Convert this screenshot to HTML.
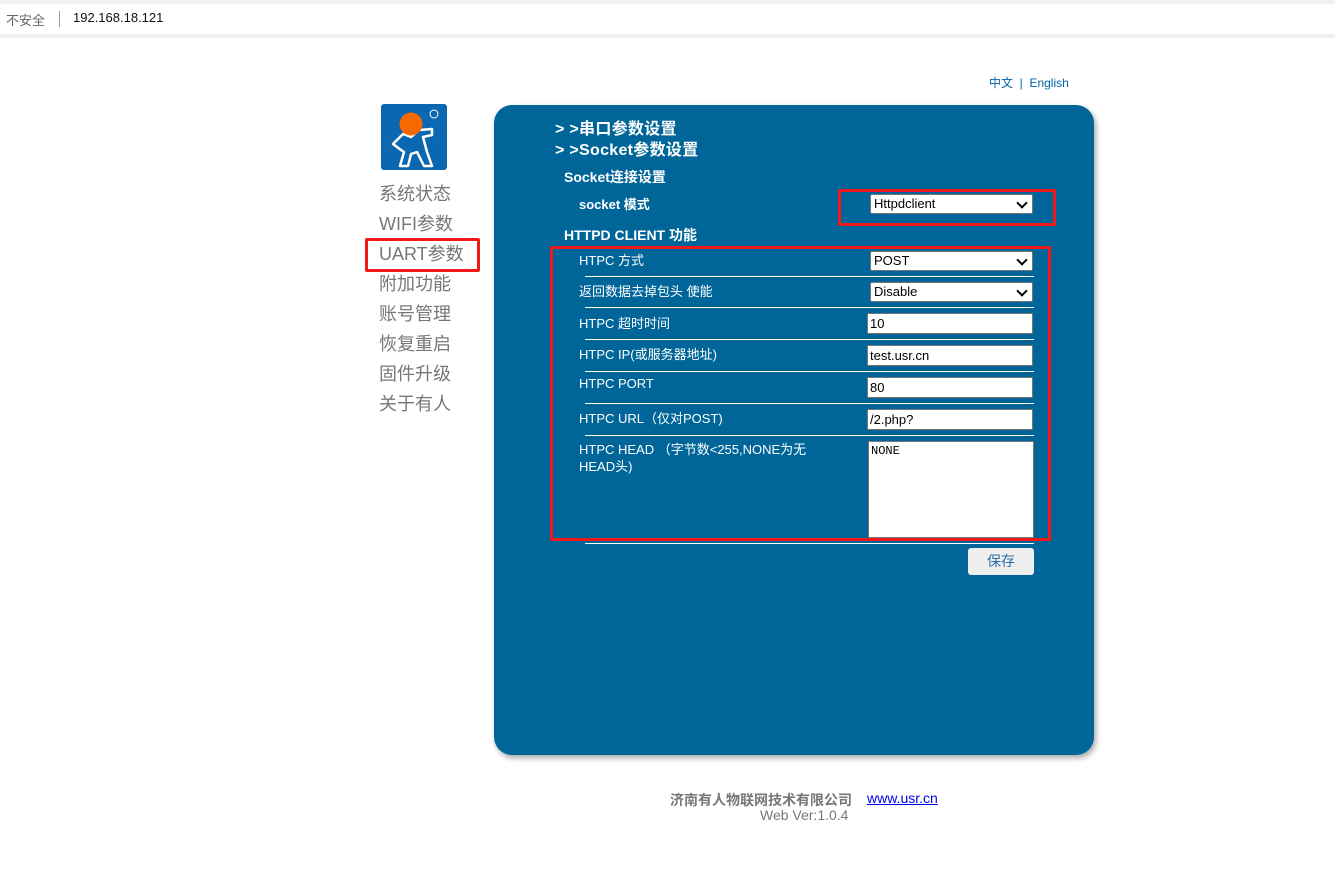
<!DOCTYPE html>
<html><head><meta charset="utf-8"><style>
*{margin:0;padding:0;box-sizing:border-box}
body{width:1335px;height:876px;background:#fff;position:relative;overflow:hidden;font-family:"Liberation Sans","Noto Sans CJK SC",sans-serif}
.a{position:absolute;white-space:nowrap}
.nav{font-size:18px;color:#777;left:379px}
.w{color:#fff}
.lbl{font-size:13px;color:#fff;left:579px}
.sep{position:absolute;left:585px;width:449px;height:1px;background:#fff}
.sel{position:absolute;left:870px;width:163px;height:20px;background:#fff;border:1px solid #767676;border-radius:2px;font-size:13px;padding:1px 3px;color:#000}
.sel:after{content:"";position:absolute;right:6px;top:4px;width:6px;height:6px;border-right:2px solid #000;border-bottom:2px solid #000;transform:rotate(45deg)}
.inp{position:absolute;left:867px;width:166px;height:21px;background:#fff;border:1px solid #767676;font-size:13px;padding:2px 2px;color:#000}
.red{position:absolute;border:3px solid #f01818;border-radius:2px}
</style></head><body>
<div class="a" style="left:0;top:0;width:1335px;height:4px;background:#f1f1f1"></div>
<div class="a" style="left:0;top:34px;width:1335px;height:4px;background:#f1f1f1"></div>
<div class="a" style="left:6px;top:10px;font-size:13px;color:#666">不安全</div>
<div class="a" style="left:59px;top:11px;width:1px;height:16px;background:#999"></div>
<div class="a" style="left:73px;top:10px;font-size:13px;color:#111">192.168.18.121</div>

<div class="a" style="left:989px;top:74px;font-size:12px;color:#0066aa">中文 &nbsp;|&nbsp; English</div>

<svg class="a" style="left:381px;top:104px" width="66" height="66" viewBox="0 0 66 66">
<rect width="66" height="66" rx="3" fill="#0a67b0"/>
<circle cx="53" cy="10" r="4" fill="none" stroke="#fff" stroke-width="1"/>
<path d="M20 46 L12 40 L22 30 L30 33 L38 26 L51 25 L51 31 L42 33 L46 48 L51 62 L43 62 L36 48 L30 50 L27 62 L19 62 L23 48 Z" fill="none" stroke="#fff" stroke-width="2.5" stroke-linejoin="round"/>
<circle cx="30" cy="20" r="11.5" fill="#f66800"/>
</svg>
<div class="a nav" style="top:180px">系统状态</div>
<div class="a nav" style="top:210px">WIFI参数</div>
<div class="a nav" style="top:240px">UART参数</div>
<div class="a nav" style="top:270px">附加功能</div>
<div class="a nav" style="top:300px">账号管理</div>
<div class="a nav" style="top:330px">恢复重启</div>
<div class="a nav" style="top:360px">固件升级</div>
<div class="a nav" style="top:390px">关于有人</div>
<div class="red" style="left:365px;top:238px;width:115px;height:34px"></div>

<div class="a" style="left:494px;top:105px;width:600px;height:650px;background:#006699;border-radius:18px;box-shadow:2px 3px 6px rgba(0,0,0,.35)"></div>
<div class="a w" style="left:555px;top:115px;font-size:16px;font-weight:bold;letter-spacing:0.3px">&gt; &gt;串口参数设置</div>
<div class="a w" style="left:555px;top:136px;font-size:16px;font-weight:bold;letter-spacing:0.3px">&gt; &gt;Socket参数设置</div>
<div class="a w" style="left:564px;top:167px;font-size:14px;font-weight:bold">Socket连接设置</div>
<div class="a w" style="left:579px;top:194px;font-size:13px;font-weight:bold">socket 模式</div>
<div class="sel" style="top:194px">Httpdclient</div>
<div class="red" style="left:838px;top:189px;width:218px;height:37px"></div>
<div class="a w" style="left:564px;top:225px;font-size:14px;font-weight:bold">HTTPD CLIENT 功能</div>

<div class="a lbl" style="top:250px">HTPC 方式</div>
<div class="sel" style="top:251px">POST</div>
<div class="sep" style="top:276px"></div>
<div class="a lbl" style="top:281px">返回数据去掉包头 使能</div>
<div class="sel" style="top:282px">Disable</div>
<div class="sep" style="top:307px"></div>
<div class="a lbl" style="top:313px">HTPC 超时时间</div>
<div class="inp" style="top:313px">10</div>
<div class="sep" style="top:339px"></div>
<div class="a lbl" style="top:344px">HTPC IP(或服务器地址)</div>
<div class="inp" style="top:345px">test.usr.cn</div>
<div class="sep" style="top:371px"></div>
<div class="a lbl" style="top:376px">HTPC PORT</div>
<div class="inp" style="top:377px">80</div>
<div class="sep" style="top:403px"></div>
<div class="a lbl" style="top:408px">HTPC URL（仅对POST)</div>
<div class="inp" style="top:409px">/2.php?</div>
<div class="sep" style="top:435px"></div>
<div class="a lbl" style="top:441px;line-height:17px">HTPC HEAD （字节数&lt;255,NONE为无<br>HEAD头)</div>
<div class="a" style="left:868px;top:441px;width:166px;height:97px;background:#fff;border:1px solid #767676;font-family:'Liberation Mono',monospace;font-size:12px;padding:2px;color:#000">NONE</div>
<div class="sep" style="top:543px"></div>
<div class="red" style="left:550px;top:246px;width:501px;height:295px"></div>
<div class="a" style="left:968px;top:548px;width:66px;height:27px;background:#efefef;border-radius:3px;font-size:14px;color:#2a6fa8;text-align:center;line-height:27px">保存</div>

<div class="a" style="left:670px;top:790px;font-size:14px;font-weight:bold;color:#777">济南有人物联网技术有限公司</div>
<div class="a" style="left:867px;top:790px;font-size:14px;color:#0000ee;text-decoration:underline">www.usr.cn</div>
<div class="a" style="left:760px;top:807px;font-size:14px;color:#777">Web Ver:1.0.4</div>
</body></html>
